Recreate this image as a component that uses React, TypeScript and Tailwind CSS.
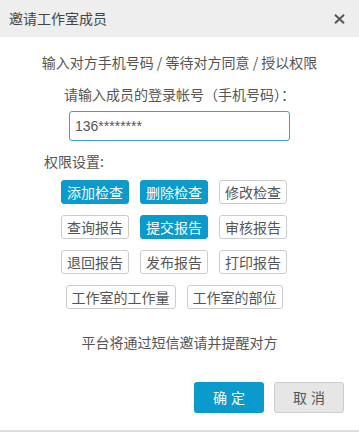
import React from "react";

const F = { fontFamily: '"Noto Sans CJK SC", "Noto Sans", sans-serif' };

function Perm({ label, active }: { label: string; active?: boolean }) {
  return (
    <div
      className={
        "h-[24px] px-[5px] flex items-center justify-center rounded-[3px] border text-[14px] leading-none " +
        (active
          ? "bg-[#0a9acb] border-[#0a9acb] text-white"
          : "bg-white border-[#cccccc] text-[#555555]")
      }
    >
      {label}
    </div>
  );
}

export default function App() {
  return (
    <div className="w-[359px] h-[432px] bg-white flex flex-col" style={F}>
      <div className="h-[37px] shrink-0 bg-[#eeeeee] pl-[9px] pr-[14px] flex items-center justify-between">
        <span className="text-[14px] text-[#444444]">邀请工作室成员</span>
        <svg width="11" height="10" viewBox="0 0 11 10">
          <path d="M1 0.8 L10 9.2 M10 0.8 L1 9.2" stroke="#555555" strokeWidth="2" />
        </svg>
      </div>
      <div className="flex-1 flex flex-col text-[#555555] text-[14px]">
        <div className="mt-[15px] h-[20px] leading-[20px] text-center">输入对方手机号码 / 等待对方同意 / 授以权限</div>
        <div className="mt-[12px] h-[20px] leading-[20px] text-center">请输入成员的登录帐号（手机号码）：</div>
        <div className="mt-[7px] flex justify-center">
          <div
            className="w-[221px] h-[30px] border border-[#3aa0cc] rounded-[3px] pl-[5px] flex items-center text-[14px] text-[#555555]"
            style={{ fontFamily: '"Liberation Sans", Arial, sans-serif' }}
          >
            136********
          </div>
        </div>
        <div className="mt-[10px] h-[20px] leading-[20px] pl-[44px]">权限设置:</div>
        <div className="mt-[9px] flex flex-col gap-[11px] pr-[11px]">
          <div className="flex justify-center gap-[11px]">
            <Perm label="添加检查" active />
            <Perm label="删除检查" active />
            <Perm label="修改检查" />
          </div>
          <div className="flex justify-center gap-[11px]">
            <Perm label="查询报告" />
            <Perm label="提交报告" active />
            <Perm label="审核报告" />
          </div>
          <div className="flex justify-center gap-[11px]">
            <Perm label="退回报告" />
            <Perm label="发布报告" />
            <Perm label="打印报告" />
          </div>
          <div className="flex justify-center gap-[11px]">
            <Perm label="工作室的工作量" />
            <Perm label="工作室的部位" />
          </div>
        </div>
        <div className="mt-[23px] h-[20px] leading-[20px] text-center">平台将通过短信邀请并提醒对方</div>
        <div className="mt-[30px] flex justify-end gap-[10px] pr-[15px]">
          <div className="w-[70px] h-[31px] rounded-[3px] bg-[#0a9acb] text-white flex items-center justify-center tracking-[4px] pl-[4px] text-[14px]">
            确定
          </div>
          <div className="w-[70px] h-[31px] rounded-[3px] bg-[#e6e6e6] border border-[#cccccc] text-[#555555] flex items-center justify-center tracking-[4px] pl-[4px] text-[14px]">
            取消
          </div>
        </div>
      </div>
      <div className="h-[2px] shrink-0 bg-[#dddddd]" />
    </div>
  );
}
